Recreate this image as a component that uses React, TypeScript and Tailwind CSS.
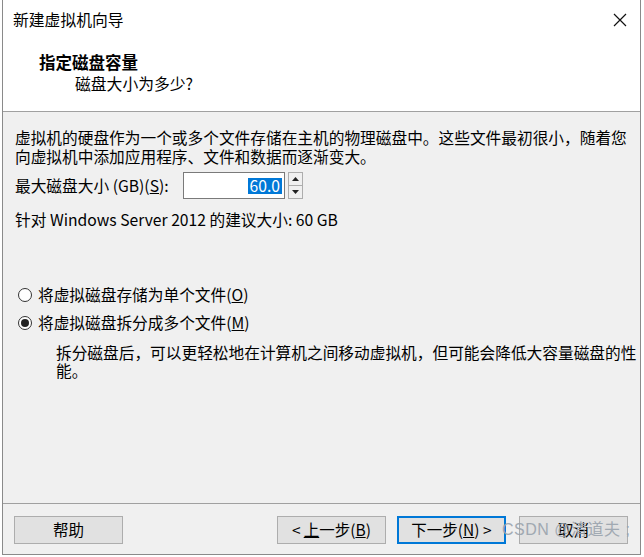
import React from "react";

const font = { fontFamily: '"Noto Sans CJK SC", "Noto Sans", sans-serif' };

function Radio({ checked }: { checked: boolean }) {
  return (
    <span className="relative inline-flex items-center justify-center w-[14px] h-[14px] rounded-full border border-[#333] bg-white shrink-0">
      {checked && <span className="w-[8px] h-[8px] rounded-full bg-[#222]" />}
    </span>
  );
}

function Btn({ children, primary }: { children: React.ReactNode; primary?: boolean }) {
  return (
    <div
      className={
        "w-[109px] h-[28px] flex items-center justify-center text-[15.5px] text-black bg-[#e1e1e1] " +
        (primary ? "border-2 border-[#0078d7]" : "border border-[#adadad]")
      }
    >
      {children}
    </div>
  );
}

export default function App() {
  return (
    <div className="w-[644px] h-[557px] bg-white relative overflow-hidden text-black" style={font}>
      <div className="ml-[2px] w-[639px] h-[555px] border-l border-r border-b border-[#8a8a8a] flex flex-col">
        {/* Title bar */}
        <div className="h-[40px] flex items-center justify-between pl-[10px] pr-[12px] bg-white">
          <span className="text-[15.8px] leading-none">新建虚拟机向导</span>
          <svg width="14" height="14" viewBox="0 0 14 14" className="mr-[1px]">
            <path d="M1 1 L13 13 M13 1 L1 13" stroke="#111" strokeWidth="1.2" />
          </svg>
        </div>
        {/* Header */}
        <div className="h-[72px] bg-white border-b border-[#a0a0a0] pl-[36px] pt-[11px]">
          <div className="text-[16.5px] font-bold leading-[22px]">指定磁盘容量</div>
          <div className="text-[15.8px] leading-[22px] pl-[36px]">磁盘大小为多少?</div>
        </div>
        {/* Body */}
        <div className="flex-1 bg-[#f0f0f0] pl-[12px] pr-[4px] pt-[16px] text-[15.7px]">
          <div className="leading-[19px] whitespace-nowrap">
            虚拟机的硬盘作为一个或多个文件存储在主机的物理磁盘中。这些文件最初很小，随着您
            <br />
            向虚拟机中添加应用程序、文件和数据而逐渐变大。
          </div>
          <div className="mt-[6px] flex items-center h-[27px]">
            <span className="w-[168px] leading-none whitespace-nowrap">
              最大磁盘大小 (GB)(<span className="underline">S</span>):
            </span>
            <div className="w-[102px] h-[27px] bg-white border border-[#7a7a7a] flex items-center justify-end pr-[2px]">
              <span className="bg-[#0078d7] text-white px-[2px] leading-[16px] text-[15.7px]">60.0</span>
            </div>
            <div className="ml-[3px] w-[15px] h-[27px] border border-[#adadad] bg-[#f0f0f0] flex flex-col">
              <div className="flex-1 flex items-center justify-center border-b border-[#adadad]">
                <svg width="7" height="4" viewBox="0 0 7 4">
                  <path d="M0 4 L3.5 0 L7 4 Z" fill="#222" />
                </svg>
              </div>
              <div className="flex-1 flex items-center justify-center">
                <svg width="7" height="4" viewBox="0 0 7 4">
                  <path d="M0 0 L3.5 4 L7 0 Z" fill="#222" />
                </svg>
              </div>
            </div>
          </div>
          <div className="mt-[11px] leading-[19px]">针对 Windows Server 2012 的建议大小: 60 GB</div>

          <div className="mt-[56px] flex items-center gap-[6px] h-[20px] pl-[3px]">
            <Radio checked={false} />
            <span className="leading-none">
              将虚拟磁盘存储为单个文件(<span className="underline">O</span>)
            </span>
          </div>
          <div className="mt-[8px] flex items-center gap-[6px] h-[20px] pl-[3px]">
            <Radio checked={true} />
            <span className="leading-none">
              将虚拟磁盘拆分成多个文件(<span className="underline">M</span>)
            </span>
          </div>
          <div className="mt-[11px] pl-[41px] leading-[18px] whitespace-nowrap">
            拆分磁盘后，可以更轻松地在计算机之间移动虚拟机，但可能会降低大容量磁盘的性
            <br />
            能。
          </div>
        </div>
        {/* Footer */}
        <div className="h-[51px] bg-[#f0f0f0] border-t border-[#a0a0a0] flex items-start pt-[12px] pl-[11px]">
          <Btn>帮助</Btn>
          <div className="ml-[154px]">
            <Btn>
              &lt; <span className="underline ml-[3px]">上</span>一步(<span className="underline">B</span>)
            </Btn>
          </div>
          <div className="ml-[11px]">
            <Btn primary>
              下一步(<span className="underline">N</span>) &gt;
            </Btn>
          </div>
          <div className="ml-[13px]">
            <Btn>取消</Btn>
          </div>
        </div>
      </div>
      <div
        className="absolute left-[502px] top-[518px] text-[16px] text-[#9aa3ad] opacity-90 tracking-[0.5px]"
        style={{ fontFamily: '"Liberation Sans", "Noto Sans CJK SC", sans-serif' }}
      >
        CSDN @清道夫 ;
      </div>
    </div>
  );
}
